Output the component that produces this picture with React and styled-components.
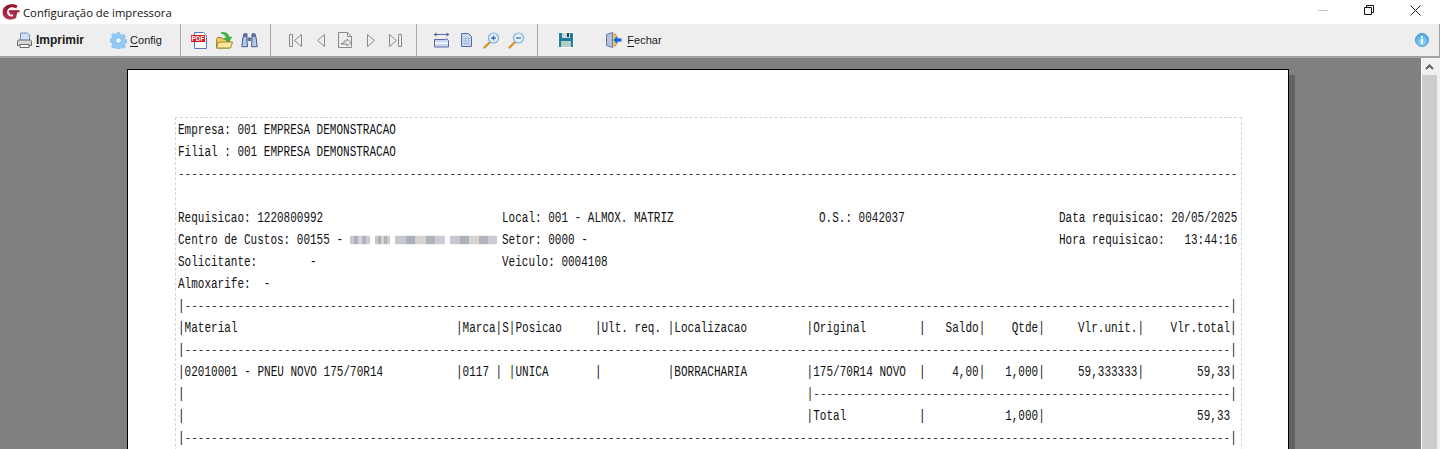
import React from 'react';
import styled, { css, createGlobalStyle } from 'styled-components';

const GlobalStyle = createGlobalStyle`
  html, body {
    margin: 0;
    padding: 0;
    height: 449px;
    overflow: hidden;
    background: #fff;
  }
`;

const Window = styled.div`
  width: 1440px;
  height: 449px;
  display: flex;
  flex-direction: column;
  overflow: hidden;
  font-family: "Liberation Sans", Arial, sans-serif;
`;

const TitleBar = styled.div`
  height: 24px;
  flex: none;
  display: flex;
  align-items: center;
  padding-right: 2px;
  box-sizing: border-box;
  background: #fff;
`;

const TitleLogo = styled.div`
  width: 23px;
  box-sizing: border-box;
  padding-left: 2px;
  display: flex;
  align-items: center;
`;

const TitleText = styled.span`
  font-family: "Open Sans", "Liberation Sans", sans-serif;
  font-size: 11.3px;
  color: #111;
  flex: 1;
`;

const WinButton = styled.div`
  width: 46px;
  height: 24px;
  box-sizing: border-box;
  padding-bottom: 4px;
  display: flex;
  align-items: center;
  justify-content: center;
`;

const Toolbar = styled.div`
  height: 32px;
  flex: none;
  display: flex;
  background: #eeeeee;
  border-bottom: 2px solid #a2a2a2;
  border-right: 1px solid #a2a2a2;
`;

const ToolGroup = styled.div`
  width: ${p => p.$w}px;
  flex: none;
  box-sizing: border-box;
  display: flex;
  align-items: center;
  padding-left: ${p => p.$pad || 0}px;
  gap: ${p => p.$gap || 0}px;
  border-right: ${p => (p.$last ? 'none' : '1px solid #a6a6a6')};
`;

const ToolButton = styled.div`
  width: ${p => p.$w || 25}px;
  height: 32px;
  flex: none;
  display: flex;
  align-items: center;
  justify-content: center;
  gap: ${p => p.$gap || 0}px;
`;

const ToolLabel = styled.span`
  font-family: "Liberation Sans", Arial, sans-serif;
  font-size: ${p => p.$size || 11}px;
  font-weight: ${p => (p.$bold ? 700 : 400)};
  color: #1a1a1a;
  u { text-underline-offset: 2px; }
`;

const InfoSlot = styled.div`
  margin-left: auto;
  padding-right: 10px;
  display: flex;
  align-items: center;
`;

const Workspace = styled.div`
  flex: 1;
  min-height: 0;
  display: flex;
  background: #808080;
`;

const PageArea = styled.div`
  flex: 1;
  min-width: 0;
  padding: 11px 0 0 127px;
  overflow: hidden;
`;

const Page = styled.div`
  width: 1162px;
  height: 600px;
  box-sizing: border-box;
  background: #fff;
  border: 1px solid #000;
  box-shadow: 6px 6px 0 #636363;
  padding: 47px 47px 0;
`;

const PrintArea = styled.div`
  width: 1067px;
  height: 500px;
  box-sizing: border-box;
  border: 1px dashed #d4d4d4;
  padding: 1px 0 0 2px;
`;

const Report = styled.div`
  font-family: "Liberation Mono", "Courier New", monospace;
  font-size: 11px;
  line-height: 22px;
  color: #111;
  white-space: pre;
`;

// the report font is much taller than it is wide
const tall = css`
  transform: scaleY(1.4);
`;

const MetaRow = styled.div`
  display: flex;
  height: 22px;
  ${tall}
`;

const MetaCell = styled.div`
  width: ${p => (p.$w ? `${p.$w}px` : 'auto')};
  flex: none;
`;

const Rule = styled.div`
  height: 22px;
  letter-spacing: 0.02px;
`;

const TableRow = styled.div`
  height: 22px;
  letter-spacing: 0.016px;
  ${p => !p.$rule && tall}
`;

const Pipe = styled.span`
  display: inline-block;
  ${tall}
`;

const Spacer = styled.div`
  height: 22px;
`;

const BlurGroup = styled.span`
  display: inline-flex;
  gap: 5px;
  height: 6.5px;
  vertical-align: 0;
`;

const BlurWord = styled.span`
  display: block;
  width: ${p => p.$w}px;
  height: 6.5px;
  background: linear-gradient(90deg, #c8c8cc 0 22%, #a9b2bc 22% 40%, #d8d2d2 40% 62%, #b0b4bc 62% 80%, #cfcbd2 80% 100%);
`;

const Scrollbar = styled.div`
  width: 19px;
  flex: none;
  background: #f0f0f0;
  border-left: 1px solid #fff;
  box-sizing: border-box;
  display: flex;
  flex-direction: column;
  padding-right: 3px;
`;

const ScrollUp = styled.div`
  height: 17px;
  display: flex;
  align-items: center;
  justify-content: center;
`;

const ScrollThumb = styled.div`
  flex: 1;
  background: #cdcdcd;
`;

const Logo = () => (
  <svg width="18" height="16" viewBox="0 0 18 16">
    <defs>
      <linearGradient id="logoFill" x1="0" y1="0" x2="0" y2="1">
        <stop offset="0" stopColor="#8e1228" />
        <stop offset="1" stopColor="#b8344e" />
      </linearGradient>
    </defs>
    <path d="M15.500 1.800C13.500.5 11.300.1 9 .3 4 .8.600 3.800.600 8.200c0 4.400 3.400 7.400 7.800 7.400 2.400 0 4.300-.6 5.700-1.500L15.300 8H8.200l-.6 2.500h3.700l-.4 1.700c-3 .8-5.800-.8-5.800-3.900 0-3.300 3-5.300 6.300-4.900 1.200.1 2 .5 2.700 1z" fill="url(#logoFill)" />
    <path d="M7 6.300h10.800l-.7 2.300H6.500z" fill="url(#logoFill)" />
  </svg>
);

const Minimize = () => (
  <svg width="10" height="10"><path d="M0 5.500h10" stroke="#c4c4c4" /></svg>
);

const Restore = () => (
  <svg width="10" height="10"><path d="M.5 2.500h7v7h-7zM2.500 2.500v-2h7v7h-2" fill="none" stroke="#111" /></svg>
);

const Close = () => (
  <svg width="11" height="11"><path d="M.5.500l10 10M10.500.500l-10 10" stroke="#222" /></svg>
);

const PrintIcon = () => (
  <svg width="17" height="17" viewBox="0 0 17 17">
    <path d="M4.500 1h7l2 2v6h-9z" fill="#cfe0f4" stroke="#6f8fc0" />
    <path d="M1.500 9.500c0-1 .6-1.500 1.500-1.500h11c.9 0 1.500.5 1.500 1.500v4h-14z" fill="#d4d6d8" stroke="#666" />
    <path d="M4 12.500h9v3H4z" fill="#fff" stroke="#666" />
  </svg>
);

const GearIcon = () => (
  <svg width="17" height="17" viewBox="0 0 17 17">
    <path d="M7 .5h3l.5 2.100 1.700.7 1.900-1.100 2 2-1.100 1.900.7 1.700 2 .5v3l-2 .5-.7 1.700 1.100 1.900-2 2-1.900-1.100-1.700.7-.5 2H7l-.5-2-1.700-.7-1.900 1.100-2-2 1.100-1.900L1.300 10.800l-2-.5v-3l2-.5.7-1.700L.9 3.200l2-2 1.900 1.100 1.700-.7z" transform="translate(.6 .3) scale(.92)" fill="#94caf4" stroke="#6ab0e8" strokeWidth=".6" />
    <circle cx="8.500" cy="8.500" r="3" fill="#eef7fd" stroke="#6ab0e8" />
  </svg>
);

const PdfIcon = () => (
  <svg width="17" height="17" viewBox="0 0 17 17">
    <path d="M3.500 .5h9l3 3v13h-12z" fill="#fff" stroke="#5a78b8" />
    <rect x="0" y="3" width="14" height="7" fill="#e0101a" />
    <text x="7" y="9" textAnchor="middle" fontFamily="Liberation Sans" fontWeight="700" fontSize="6.500" fill="#fff">PDF</text>
  </svg>
);

const OpenIcon = () => (
  <svg width="17" height="17" viewBox="0 0 17 17">
    <path d="M.5 7.500l1-2h4l1 1.500h7v9H.500z" fill="#f0cc60" stroke="#a08430" />
    <path d="M.5 16L2.500 10h14l-2 6z" fill="#fbe89a" stroke="#a08430" />
    <path d="M5 .8c4.500-.8 7.500 1 8.300 4.700l2.400-.5-3.300 5-4.200-3.600 2.300-.4C10 3.600 8 1.900 5 .8z" fill="#3cb83c" stroke="#1f8a1f" strokeWidth=".6" />
  </svg>
);

const BinocularsIcon = () => (
  <svg width="17" height="15" viewBox="0 0 17 15">
    <path d="M3 .8h3v4.200h-.2l.7 8.700H.8L1.700 6z" fill="#b4c8ec" stroke="#4a5a90" />
    <path d="M11 .8h3l1.300 5.200.9 7.700h-5.700l.7-8.700H11z" fill="#b4c8ec" stroke="#4a5a90" />
    <path d="M6.500 4.500h4v3.500h-4z" fill="#5f6f9e" />
    <path d="M3 1h3v3H3zM11 1h3v3h-3z" fill="#5f6f9e" />
  </svg>
);

const navStroke = { fill: 'none', stroke: '#8a8a8a' };

const FirstIcon = () => (
  <svg width="13" height="13" {...navStroke}><path d="M.5.500h3v12h-3zM12.500.500l-7 6 7 6z" /></svg>
);
const PrevIcon = () => (
  <svg width="8" height="13" {...navStroke}><path d="M7.500.500l-7 6 7 6z" /></svg>
);
const GoToIcon = () => (
  <svg width="15" height="16" {...navStroke}>
    <path d="M.5.500h9l4 4v11H.500zM9.500.500v4h4" />
    <path d="M3 11.500h3v-2.500h3v-2l4 3.500-4 3.500v-2H3z" fill="#eee" />
  </svg>
);
const NextIcon = () => (
  <svg width="8" height="13" {...navStroke}><path d="M.5.500l7 6-7 6z" /></svg>
);
const LastIcon = () => (
  <svg width="13" height="13" {...navStroke}><path d="M.5.500l7 6-7 6zM9.500.500h3v12h-3z" /></svg>
);

const FitWidthIcon = () => (
  <svg width="17" height="16" viewBox="0 0 17 16">
    <path d="M1 2.500h15" stroke="#5a68a0" />
    <path d="M3.500.500l-3 2 3 2zM13.500.500l3 2-3 2z" fill="#5a68a0" />
    <path d="M1.500 7.500h11l1-1 2 2v6.500h-14z" fill="#c4d6f0" stroke="#5a68a8" />
    <path d="M2 10h13v2H2z" fill="#eef4fc" />
  </svg>
);

const FullPageIcon = () => (
  <svg width="11" height="14" viewBox="0 0 11 14">
    <path d="M.5.500h7l3 3v10H.500z" fill="#c8d8f0" stroke="#5a68a8" />
    <path d="M2.500 5.500h6M2.500 8h6M2.500 10.500h6" stroke="#9ab4dc" />
  </svg>
);

const ZoomIcon = ({ minus }) => (
  <svg width="17" height="17" viewBox="0 0 17 17">
    <path d="M1.500 15.500l5-5" stroke="#d8922e" strokeWidth="2.400" strokeLinecap="round" />
    <circle cx="10.500" cy="6" r="5" fill="#e8f3fc" stroke="#78b0e0" strokeWidth="1.200" />
    <path d={minus ? 'M8 6h5' : 'M8 6h5M10.500 3.500v5'} stroke="#3c6cb4" strokeWidth="1.300" />
  </svg>
);

const SaveIcon = () => (
  <svg width="16" height="16" viewBox="0 0 16 16">
    <path d="M0 0h16v16H0z" fill="#fff" />
    <path d="M1 1h14v14H1z" fill="#1c7f9c" />
    <path d="M4 1h8v5H4z" fill="#cfd6d8" />
    <path d="M9 1h2v4H9z" fill="#17414e" />
    <path d="M3 9h10v6H3z" fill="#b4cfc4" />
  </svg>
);

const DoorIcon = () => (
  <svg width="16" height="16" viewBox="0 0 16 16">
    <path d="M6 2h4v12H6z" fill="#f0c860" stroke="#b08a30" strokeWidth=".7" />
    <path d="M.5 2.500L6.500.5v15l-6-2z" fill="#b4c2dc" stroke="#6a7aa8" />
    <path d="M15.500 6.500H11.500V4L7.500 8l4 4V9.500h4z" fill="#0a5fe0" />
  </svg>
);

const InfoIcon = () => (
  <svg width="14" height="14" viewBox="0 0 14 14">
    <defs>
      <radialGradient id="infoFill" cx=".5" cy=".7" r=".7">
        <stop offset="0" stopColor="#9ad6f6" />
        <stop offset="1" stopColor="#4ea4e0" />
      </radialGradient>
    </defs>
    <circle cx="7" cy="7" r="6.500" fill="url(#infoFill)" stroke="#4a9ad8" />
    <path d="M6 5.800h2V11H6zM6 3h2v1.800H6z" fill="#fff" />
  </svg>
);

const ChevronUp = () => (
  <svg width="9" height="6"><path d="M1 5l3.500-3.500L8 5" fill="none" stroke="#606060" strokeWidth="2" /></svg>
);

const dashes = n => '-'.repeat(n);

// a report line: each cell is padded to its column width
const line = cells => cells.map(([text, width]) => text.padEnd(width)).join('');

const widths = [42, 6, 2, 13, 11, 21, 17, 9, 9, 15, 14];

const tableRow = texts => line(texts.map((t, i) => [t, widths[i] || 0]));

const RuleRow = ({ indent }) => (
  <TableRow $rule>
    <Pipe>|</Pipe>
    {indent ? ' '.repeat(94) : ''}
    {indent ? <Pipe>|</Pipe> : ''}
    {dashes(indent ? 63 : 158)}
    <Pipe>|</Pipe>
  </TableRow>
);

const App = () => (
  <Window>
    <GlobalStyle />
    <TitleBar>
      <TitleLogo><Logo /></TitleLogo>
      <TitleText>Configuração de impressora</TitleText>
      <WinButton><Minimize /></WinButton>
      <WinButton><Restore /></WinButton>
      <WinButton><Close /></WinButton>
    </TitleBar>
    <Toolbar>
      <ToolGroup $w={181} $pad={8} $gap={12}>
        <ToolButton $w={84} $gap={3}>
          <PrintIcon />
          <ToolLabel $bold $size={12}><u>I</u>mprimir</ToolLabel>
        </ToolButton>
        <ToolButton $w={64} $gap={3}>
          <GearIcon />
          <ToolLabel><u>C</u>onfig</ToolLabel>
        </ToolButton>
      </ToolGroup>
      <ToolGroup $w={90} $pad={6}>
        <ToolButton><PdfIcon /></ToolButton>
        <ToolButton><OpenIcon /></ToolButton>
        <ToolButton><BinocularsIcon /></ToolButton>
      </ToolGroup>
      <ToolGroup $w={146} $pad={12}>
        <ToolButton><FirstIcon /></ToolButton>
        <ToolButton><PrevIcon /></ToolButton>
        <ToolButton><GoToIcon /></ToolButton>
        <ToolButton><NextIcon /></ToolButton>
        <ToolButton><LastIcon /></ToolButton>
      </ToolGroup>
      <ToolGroup $w={121} $pad={12}>
        <ToolButton><FitWidthIcon /></ToolButton>
        <ToolButton><FullPageIcon /></ToolButton>
        <ToolButton><ZoomIcon /></ToolButton>
        <ToolButton><ZoomIcon minus /></ToolButton>
      </ToolGroup>
      <ToolGroup $w={140} $pad={15} $gap={21} $last>
        <ToolButton><SaveIcon /></ToolButton>
        <ToolButton $w={70} $gap={5}>
          <DoorIcon />
          <ToolLabel><u>F</u>echar</ToolLabel>
        </ToolButton>
      </ToolGroup>
      <InfoSlot><InfoIcon /></InfoSlot>
    </Toolbar>
    <Workspace>
      <PageArea>
        <Page>
          <PrintArea>
            <Report>
              <MetaRow>Empresa: 001 EMPRESA DEMONSTRACAO</MetaRow>
              <MetaRow>Filial : 001 EMPRESA DEMONSTRACAO</MetaRow>
              <Rule>{dashes(160)}</Rule>
              <Spacer />
              <MetaRow>
                <MetaCell $w={324}>Requisicao: 1220800992</MetaCell>
                <MetaCell $w={317}>Local: 001 - ALMOX. MATRIZ</MetaCell>
                <MetaCell $w={240}>O.S.: 0042037</MetaCell>
                <MetaCell>Data requisicao: 20/05/2025</MetaCell>
              </MetaRow>
              <MetaRow>
                <MetaCell $w={324}>
                  {'Centro de Custos: 00155 - '}
                  <BlurGroup>
                    <BlurWord $w={20} />
                    <BlurWord $w={15} />
                    <BlurWord $w={50} />
                    <BlurWord $w={47} />
                  </BlurGroup>
                </MetaCell>
                <MetaCell $w={557}>Setor: 0000 -</MetaCell>
                <MetaCell>Hora requisicao:   13:44:16</MetaCell>
              </MetaRow>
              <MetaRow>
                <MetaCell $w={324}>Solicitante:        -</MetaCell>
                <MetaCell>Veiculo: 0004108</MetaCell>
              </MetaRow>
              <MetaRow>Almoxarife:  -</MetaRow>
              <RuleRow />
              <TableRow>{tableRow(['|Material', '|Marca', '|S', '|Posicao', '|Ult. req.', '|Localizacao', '|Original', '|   Saldo', '|    Qtde', '|     Vlr.unit.', '|    Vlr.total', '|'])}</TableRow>
              <RuleRow />
              <TableRow>{tableRow(['|02010001 - PNEU NOVO 175/70R14', '|0117', '| ', '|UNICA', '|', '|BORRACHARIA', '|175/70R14 NOVO', '|    4,00', '|   1,000', '|     59,333333', '|        59,33', '|'])}</TableRow>
              <RuleRow indent />
              <TableRow>{`${'|'.padEnd(95)}${'|Total'.padEnd(17)}|            1,000|${'59,33'.padStart(28)}`}</TableRow>
              <RuleRow />
            </Report>
          </PrintArea>
        </Page>
      </PageArea>
      <Scrollbar>
        <ScrollUp><ChevronUp /></ScrollUp>
        <ScrollThumb />
      </Scrollbar>
    </Workspace>
  </Window>
);

export default App;
